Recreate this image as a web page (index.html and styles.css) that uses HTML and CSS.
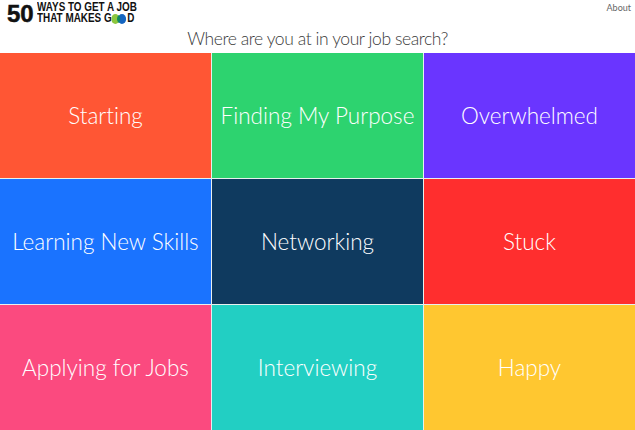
FILE: index.html
```html
<!DOCTYPE html>
<html lang="en">
<head>
<meta charset="utf-8">
<title>50 Ways to Get a Job That Makes Good</title>
<link rel="stylesheet" href="styles.css">
</head>
<body>
<header class="top">
  <a class="logo" href="#">
    <span class="logo-num">50</span>
    <span class="logo-text">
      <span class="logo-line">WAYS TO GET A JOB</span>
      <span class="logo-line">THAT MAKES G<svg class="logo-oo" viewBox="0 0 19 10" aria-hidden="true"><circle cx="5" cy="5" r="5" fill="#8cc63f"/><circle cx="13" cy="5" r="5" fill="#1565c0"/><path d="M9 1a5 5 0 0 1 0 8a5 5 0 0 1 0-8z" fill="#0f8a5f"/></svg>D</span>
    </span>
  </a>
  <a class="about" href="#">About</a>
</header>
<h1 class="question">Where are you at in your job search?</h1>
<main class="grid">
  <a class="tile starting" href="#">Starting</a>
  <a class="tile purpose" href="#">Finding My Purpose</a>
  <a class="tile overwhelmed" href="#">Overwhelmed</a>
  <a class="tile skills" href="#">Learning New Skills</a>
  <a class="tile networking" href="#">Networking</a>
  <a class="tile stuck" href="#">Stuck</a>
  <a class="tile applying" href="#">Applying for Jobs</a>
  <a class="tile interviewing" href="#">Interviewing</a>
  <a class="tile happy" href="#">Happy</a>
</main>
</body>
</html>
```
FILE: styles.css
```css
* { box-sizing: border-box; }
html, body { margin: 0; padding: 0; }
body {
  width: 635px;
  height: 430px;
  overflow: hidden;
  background: #fff;
  font-family: "Lato", "Open Sans", sans-serif;
  font-variant-ligatures: none;
  display: flex;
  flex-direction: column;
}
a { text-decoration: none; color: inherit; }
.top {
  height: 27px;
  display: flex;
  justify-content: space-between;
  align-items: flex-start;
  padding: 0 4px 0 7px;
}
.logo { display: flex; align-items: flex-start; color: #111; }
.logo-num {
  font-family: "Liberation Sans", sans-serif;
  font-weight: 700;
  font-size: 24px;
  line-height: 27px;
  width: 30px;
  -webkit-text-stroke: 0.5px #111;
}
.logo-text { display: flex; flex-direction: column; padding-top: 2px; }
.logo-line {
  display: flex;
  align-items: center;
  font-family: "Liberation Sans", sans-serif;
  font-weight: 700;
  font-size: 12px;
  line-height: 11px;
  white-space: nowrap;
  transform: scaleX(0.825);
  transform-origin: left center;
}
.logo-oo { width: 19px; height: 10px; }
.about { font-size: 9px; line-height: 14px; color: #666; padding-top: 1px; }
.question {
  margin: 0;
  height: 26px;
  text-align: center;
  font-size: 17.5px;
  line-height: 23px;
  font-weight: 300;
  letter-spacing: -0.42px;
  color: #3a3a3a;
}
.grid {
  flex: 1;
  display: grid;
  grid-template-columns: repeat(3, 1fr);
  grid-template-rows: repeat(3, 1fr);
  gap: 1px;
  background: #e8f0ee;
}
.tile {
  display: flex;
  align-items: center;
  justify-content: center;
  color: #fff;
  font-size: 22.5px;
  font-weight: 300;
  white-space: nowrap;
}
.starting { background: #ff5634; }
.purpose { background: #2dd36f; }
.overwhelmed { background: #6a35ff; }
.skills { background: #1a73ff; }
.networking { background: #0f3a5f; }
.stuck { background: #ff2e2e; }
.applying { background: #fb4a7f; }
.interviewing { background: #22cfc3; }
.happy { background: #ffc730; }
```
